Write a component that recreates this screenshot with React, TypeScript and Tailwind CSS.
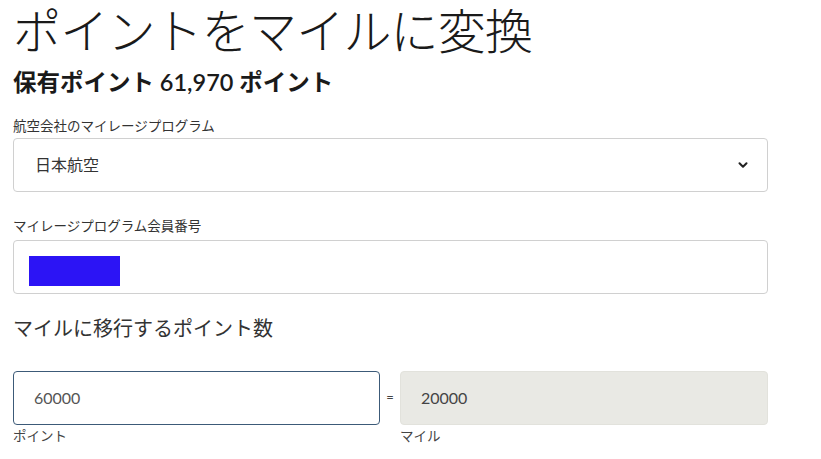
import { ChevronDown } from "lucide-react";

const font = { fontFamily: 'Lato, "Noto Sans CJK JP", sans-serif' };

export default function App() {
  return (
    <div
      className="w-[821px] h-[459px] overflow-hidden bg-white text-[#222]"
      style={font}
    >
      <div className="w-[755px] ml-[13px] flex flex-col">
        <h1 className="text-[48px] leading-none font-light pt-[7px] text-[#1a1a1a] tracking-[-0.8px]">
          ポイントをマイルに変換
        </h1>
        <p className="mt-[16px] text-[23.5px] leading-none font-semibold text-[#1a1a1a]">
          保有ポイント 61,970 ポイント
        </p>

        {/* Airline program */}
        <label className="mt-[25px] text-[13.5px] leading-none text-[#333]">
          航空会社のマイレージプログラム
        </label>
        <div className="mt-[5px] h-[54px] rounded-[4px] border border-[#d0d0d0] flex items-center justify-between pl-[21px] pr-[17px]">
          <span className="text-[16px] text-[#333]">日本航空</span>
          <ChevronDown size={14} strokeWidth={3.5} className="text-[#222]" />
        </div>

        {/* Member number */}
        <label className="mt-[28px] text-[13.5px] leading-none text-[#333]">
          マイレージプログラム会員番号
        </label>
        <div className="mt-[6px] h-[54px] rounded-[4px] border border-[#d0d0d0] flex items-start pl-[15px] pt-[15px]">
          <div className="w-[91px] h-[30px] bg-[#2c14f5]" />
        </div>

        {/* Points to convert */}
        <h2 className="mt-[24px] text-[20px] leading-none font-normal text-[#333]">
          マイルに移行するポイント数
        </h2>
        <div className="mt-[33px] flex items-start">
          <div className="w-[367px] flex flex-col">
            <div className="h-[54px] rounded-[4px] border border-[#3c5a78] flex items-center pl-[20px] text-[16px] text-[#555]">
              60000
            </div>
            <span className="mt-[5px] text-[13.5px] leading-none text-[#444]">
              ポイント
            </span>
          </div>
          <div className="w-[20px] h-[54px] flex items-center justify-center text-[13px] text-[#444]">
            =
          </div>
          <div className="flex-1 flex flex-col">
            <div className="h-[54px] rounded-[4px] bg-[#e9e9e4] border border-[#e2e2dc] flex items-center pl-[20px] text-[16px] text-[#444]">
              20000
            </div>
            <span className="mt-[5px] text-[13.5px] leading-none text-[#444]">
              マイル
            </span>
          </div>
        </div>
      </div>
    </div>
  );
}
